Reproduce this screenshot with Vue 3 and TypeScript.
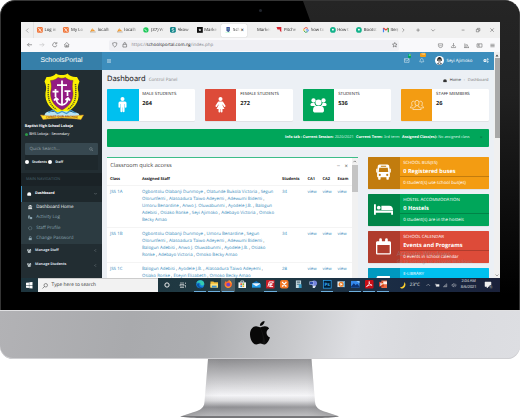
<script setup lang="ts">
interface Tab { label: string; kind: string; color: string; active?: boolean }
interface Stat { label: string; value: number; color: string; icon: string }
interface Panel { title: string; value: string; note: string; color: string; icon: string }
interface ClassRow { name: string; students: number; lines: string[] }
interface TaskIcon { kind: string; open?: boolean; current?: boolean }

const tabs: Tab[] = [
  { label: 'Log in', kind: 'xampp', color: '#f0763a' },
  { label: 'My Lo', kind: 'xampp', color: '#f0763a' },
  { label: 'localh', kind: 'pma', color: '#f29a2e' },
  { label: 'localh', kind: 'pma', color: '#f29a2e' },
  { label: '(37) W', kind: 'dot', color: '#1fc95b' },
  { label: 'Akow', kind: 'teal', color: '#12858a' },
  { label: 'Marke', kind: 'black', color: '#111' },
  { label: 'Sch', kind: 'crest', color: '#3d4f9c', active: true },
  { label: 'Marketi', kind: 'none', color: '' },
  { label: 'Pitche', kind: 'pitch', color: '#d8232f' },
  { label: 'how to', kind: 'google', color: '' },
  { label: 'How t', kind: 'ring', color: '#13b28b' },
  { label: 'Bootst', kind: 'ring', color: '#13b28b' },
  { label: 'Item', kind: 'gmail', color: '' },
]

const stats: Stat[] = [
  { label: 'MALE STUDENTS', value: 264, color: '#00c0ef', icon: 'male' },
  { label: 'FEMALE STUDENTS', value: 272, color: '#dd4b39', icon: 'female' },
  { label: 'STUDENTS', value: 536, color: '#00a65a', icon: 'group' },
  { label: 'STAFF MEMBERS', value: 26, color: '#f39c12', icon: 'people' },
]

const panels: Panel[] = [
  { title: 'SCHOOL BUS(ES)', value: '0 Registered buses', note: '0 student(s) use school bus(es)', color: '#f39c12', icon: 'bus' },
  { title: 'HOSTEL ACCOMMODATION', value: '0 Hostels', note: '0 student(s) are in the hostels', color: '#00a65a', icon: 'bed' },
  { title: 'SCHOOL CALENDAR', value: 'Events and Programs', note: '0 events in school calendar', color: '#dd4b39', icon: 'calendar' },
  { title: 'E-LIBRARY', value: '', note: '', color: '#00c0ef', icon: 'book' },
]

const rows: ClassRow[] = [
  {
    name: 'JSS 1A', students: 34,
    lines: [
      'Ogbontolu Olabanji Dunmoye , Olatunde Bukola Victoria , Segun',
      'Olorunfemi , Alasoadura Taiwo Adeyemi , Adewumi Bidemi ,',
      'Umoru Benardine , Anwo J. Oluwabunmi , Ayodele J.B. , Balogun',
      'Adebisi , Osiako Ronke , Seyi Ajimoko , Adebayo Victoria , Omoko',
      'Becky Amao',
    ],
  },
  {
    name: 'JSS 1B', students: 34,
    lines: [
      'Ogbontolu Olabanji Dunmoye , Umoru Benardine , Segun',
      'Olorunfemi , Alasoadura Taiwo Adeyemi , Adewumi Bidemi ,',
      'Balogun Adebisi , Anwo J. Oluwabunmi , Ayodele J.B. , Osiako',
      'Ronke , Adebayo Victoria , Omoko Becky Amao',
    ],
  },
  {
    name: 'JSS 1C', students: 28,
    lines: [
      'Balogun Adebisi , Ayodele J.B. , Alasoadura Taiwo Adeyemi ,',
      'Osiako Ronke , Eseyin Elizabeth , Omoko Becky Amao',
    ],
  },
]

const submenu = [
  { label: 'Dashboard Home', icon: 'bank', on: true },
  { label: 'Activity Log', icon: 'copy' },
  { label: 'Staff Profile', icon: 'circle' },
  { label: 'Change Password', icon: 'lock' },
]

const taskIcons: TaskIcon[] = [
  { kind: 'edge', open: true }, { kind: 'folder', open: true }, { kind: 'firefox', open: true, current: true },
  { kind: 'store' }, { kind: 'mail' }, { kind: 'filezilla', open: true }, { kind: 'xampp' }, { kind: 'server' },
  { kind: 'globe' }, { kind: 'ps', open: true }, { kind: 'media' }, { kind: 'photos', open: true },
  { kind: 'acrobat', open: true }, { kind: 'ppt', open: true },
]

const split = (line: string): string[] => line.split(/(,)/)
</script>

<template>
  <div class="stage">
    <svg class="sprite" width="0" height="0">
      <symbol id="male" viewBox="0 0 24 32"><circle cx="12" cy="4" r="4" /><path d="M7 9h10a3 3 0 0 1 3 3v8a1.6 1.6 0 0 1-3.2 0v-6h-.7v15a2 2 0 0 1-3.8 0v-8h-.6v8a2 2 0 0 1-3.8 0V14h-.7v6A1.6 1.6 0 0 1 4 20v-8a3 3 0 0 1 3-3z" /></symbol>
      <symbol id="female" viewBox="0 0 24 32"><circle cx="12" cy="4" r="4" /><path d="M9 9h6c1.500 0 2.300 1 3 2l4 6.500a1.700 1.700 0 0 1-2.800 1.800L16 14.500v2l4 7.500h-4v5a1.800 1.800 0 0 1-3.600 0v-5h-.8v5a1.800 1.800 0 0 1-3.600 0v-5H4l4-7.500v-2l-3.200 4.800A1.700 1.700 0 0 1 2 17.500L6 11c.7-1 1.500-2 3-2z" /></symbol>
      <symbol id="group" viewBox="0 0 34 30"><circle cx="7" cy="5" r="4.300" /><circle cx="27" cy="5" r="4.300" /><circle cx="17" cy="9" r="6" /><path d="M3 10h6c1 4 2 5 4 6H3c-3 0-3-5 0-6zM31 10h-6c-1 4-2 5-4 6h10c3 0 3-5 0-6zM12 16h10c4 0 6 3 6 9 0 3-2 4-4 4H10c-2 0-4-1-4-4 0-6 2-9 6-9z" /></symbol>
      <symbol id="people" viewBox="0 0 34 26"><g fill="none" stroke="currentColor" stroke-width="1.700"><ellipse cx="17" cy="8" rx="5" ry="6.500" /><path d="M14 14v3c-3 1-7 2-7 7h20c0-5-4-6-7-7v-3M11 5C7 2 4 5 4 9c0 3 1 4 2 5-3 1-5 3-5 6h6M23 5c4-3 7 0 7 4 0 3-1 4-2 5 3 1 5 3 5 6h-6" /></g></symbol>
      <symbol id="bus" viewBox="0 0 28 32"><path fill-rule="evenodd" d="M7 1h14c3 0 4 2 4 5l1 5v12c0 1-.5 2-2 2v3a2.300 2.300 0 0 1-4.500 0v-3h-11v3A2.300 2.300 0 0 1 4 28v-3c-1.500 0-2-1-2-2V11l1-5c0-3 1-5 4-5zM9 3.500v1.500h10V3.500zM6 7L5 15h18l-1-8zM7 18.500a2 2 0 1 0 0 4 2 2 0 0 0 0-4zM21 18.500a2 2 0 1 0 0 4 2 2 0 0 0 0-4z" /><path d="M0 9h1.500v7H0zM26.500 9H28v7h-1.500z" /></symbol>
      <symbol id="bed" viewBox="0 0 36 24"><path d="M0 2h3.500v12H36v8h-3.500v-4h-29v4H0z" /><circle cx="9" cy="8.500" r="3.500" /><path d="M14 5h15c4 0 7 3 7 8H14z" /></symbol>
      <symbol id="calendar" viewBox="0 0 28 30"><path fill-rule="evenodd" d="M3 5h3V2a2 2 0 0 1 5 0v3h6V2a2 2 0 0 1 5 0v3h3c2 0 3 1 3 3v19c0 2-1 3-3 3H3c-2 0-3-1-3-3V8c0-2 1-3 3-3zM2.500 12v15.500h23V12z" /></symbol>
      <symbol id="book" viewBox="0 0 28 30"><path d="M5 1h21v22H6v3h20v3H5c-3 0-4-2-4-5V5c0-3 1-4 4-4z" /></symbol>
      <symbol id="dash" viewBox="0 0 24 20"><path d="M12 1a11 11 0 0 1 11 11c0 3-1 5-2 7H3c-1-2-2-4-2-7A11 11 0 0 1 12 1z" /></symbol>
      <symbol id="bank" viewBox="0 0 24 24"><path d="M12 0l12 6v2H0V6zM3 10h3v8H3zM8 10h3v8H8zM13 10h3v8h-3zM18 10h3v8h-3zM1 19h22v2H1zM0 22h24v2H0z" /></symbol>
      <symbol id="copy" viewBox="0 0 24 24"><path d="M1 2h8l3 3v3H8v10H1zM10 10h13v12H10z" /></symbol>
      <symbol id="circle" viewBox="0 0 24 24"><circle cx="12" cy="12" r="9" fill="none" stroke="currentColor" stroke-width="3" stroke-dasharray="5 2" /></symbol>
      <symbol id="lock" viewBox="0 0 24 24"><path fill-rule="evenodd" d="M4 11h2V7a6 6 0 0 1 12 0v4h2v12H4zm5 0h6V7a3 3 0 0 0-6 0z" /></symbol>
      <symbol id="search" viewBox="0 0 24 24"><g fill="none" stroke="currentColor" stroke-width="2.500"><circle cx="10" cy="10" r="7" /><path d="M15 15l7 7" /></g></symbol>
      <symbol id="cogs" viewBox="0 0 28 24"><g fill="none" stroke="currentColor"><circle cx="9" cy="12" r="5" stroke-width="5" /><circle cx="22" cy="6" r="3" stroke-width="3.500" /><circle cx="22" cy="18" r="3" stroke-width="3.500" /></g></symbol>
    </svg>

    <div class="monitor">
      <div class="gloss"></div>
      <i class="camera"></i>
      <div class="screen">
        <!-- browser tab strip -->
        <div class="tabs">
          <svg class="chev" viewBox="0 0 12 12"><path d="M8 1L3 6l5 5" /></svg>
          <div class="tablist">
            <div v-for="(t, i) in tabs" :key="i" class="tab" :class="{ active: t.active, bare: t.kind === 'none' }">
              <svg v-if="t.kind !== 'none'" class="fav" viewBox="0 0 12 12">
                <g v-if="t.kind === 'xampp'"><rect width="12" height="12" rx="2.500" :fill="t.color" /><path d="M3 3l6 6M9 3L3 9M3 3h2M9 9H7" stroke="#fff" stroke-width="1.500" fill="none" /></g>
                <g v-else-if="t.kind === 'pma'"><path d="M0 10L5 2l1 7zM6 4l5 5H6z" :fill="t.color" /><path d="M0 10.500h12" stroke="#8b8b8b" /></g>
                <g v-else-if="t.kind === 'dot'"><circle cx="6" cy="6" r="5.500" :fill="t.color" /><path d="M4 4c0 3 2 4 4 4" stroke="#fff" stroke-width="1.500" fill="none" /></g>
                <g v-else-if="t.kind === 'teal'"><rect width="12" height="12" rx="3" :fill="t.color" /><path d="M8 3C3 2 3 6 6 6s3 4-2 3" stroke="#fff" stroke-width="1.500" fill="none" /></g>
                <g v-else-if="t.kind === 'black'"><rect width="12" height="12" :fill="t.color" /><path d="M6 3l1 2h2L7.500 6.500 8 9 6 7.500 4 9l.5-2.500L3 5h2z" fill="#fff" /></g>
                <g v-else-if="t.kind === 'crest'"><path d="M3 0h7v8l-3 3-4-3z" :fill="t.color" /><path d="M1 11h10M5 3h3M5 6h3" stroke="#8fa" /></g>
                <g v-else-if="t.kind === 'pitch'"><path d="M1 0h10v11L8 8V5H3z" :fill="t.color" /></g>
                <g v-else-if="t.kind === 'google'" fill="none" stroke-width="2"><path d="M10 3A5 5 0 0 0 2 4" stroke="#ea4335" /><path d="M2 4a5 5 0 0 0 0 4" stroke="#fbbc05" /><path d="M2 8a5 5 0 0 0 7 2" stroke="#34a853" /><path d="M9 10c2-1 2-3 2-4H6" stroke="#4285f4" /></g>
                <g v-else-if="t.kind === 'ring'"><circle cx="6" cy="6" r="6" :fill="t.color" /><circle cx="6" cy="5.500" r="2" fill="#fff" /></g>
                <g v-else fill="none" stroke-width="2.500"><path d="M1 11V2" stroke="#4285f4" /><path d="M1 2l5 4 5-4" stroke="#ea4335" /><path d="M11 2v9" stroke="#34a853" /></g>
              </svg>
              <span class="tlabel">{{ t.label }}</span>
              <b v-if="t.active" class="tx">×</b>
            </div>
          </div>
          <div class="winctl">
            <svg viewBox="0 0 12 12"><path d="M4 1l5 5-5 5" /></svg>
            <svg viewBox="0 0 12 12"><path d="M6 1v10M1 6h10" /></svg>
            <svg viewBox="0 0 12 12"><path d="M1 4l5 5 5-5" /></svg>
            <i></i>
            <svg viewBox="0 0 12 12"><path d="M2 6h8" /></svg>
            <svg viewBox="0 0 12 12"><path d="M1 4h7v7H1zM4 4V1h7v7H8" /></svg>
            <svg viewBox="0 0 12 12"><path d="M1 1l10 10M11 1L1 11" /></svg>
          </div>
        </div>

        <!-- address bar -->
        <div class="toolbar">
          <div class="nav">
            <svg viewBox="0 0 12 12"><path d="M11 6H1M5 2L1 6l4 4" /></svg>
            <svg class="dim" viewBox="0 0 12 12"><path d="M1 6h10M7 2l4 4-4 4" /></svg>
            <svg viewBox="0 0 12 12"><path d="M10.500 7A4.600 4.600 0 1 1 9 2.500M10.500 0v4h-4" /></svg>
            <svg viewBox="0 0 12 12"><path d="M1 6l5-5 5 5M2 5v6h8V5M5 11V7h2v4" /></svg>
          </div>
          <div class="url">
            <svg viewBox="0 0 12 12"><path d="M6 1c2 1 3 1 4.500 1 0 4-1 7-4.500 9C2.500 9 1.500 6 1.500 2 3 2 4 2 6 1z" /></svg>
            <svg viewBox="0 0 12 12"><path d="M2 5h8v6H2zM4 5V3a2 2 0 0 1 4 0v2" /></svg>
            <span>https://<em>schoolsportal.com.ng</em>/index.php</span>
            <svg class="star" viewBox="0 0 12 12"><path d="M6 1l1.500 3.500 3.500.3L8.300 7l1 4L6 9l-3.300 2 1-4L1 4.800l3.500-.3z" /></svg>
          </div>
          <div class="tools">
            <svg viewBox="0 0 12 12"><path d="M1 2h10v4a5 5 0 0 1-10 0zM3.500 5L6 7.500 8.500 5" /></svg>
            <svg viewBox="0 0 12 12"><path d="M6 0v8M3 5l3 3 3-3M1 8v3h10V8" /></svg>
            <svg viewBox="0 0 12 12"><path d="M2 1v10M5 3v8M7 3l4 8M0 11h12" /></svg>
            <svg viewBox="0 0 12 12"><path d="M0 2h12v8H0zM5 2v8M2 4h2M2 6h2" /></svg>
            <svg viewBox="0 0 12 12"><path d="M1 3h10M1 6h10M1 9h10" /></svg>
          </div>
        </div>

        <!-- web page -->
        <div class="page">
          <aside class="side">
            <div class="brand">SchoolsPortal</div>
            <svg class="crest" viewBox="0 0 82 94">
              <path d="M10 8C18 9 25 6 29 1c5 4 18 4 23 0 4 5 11 8 19 7l5 9c-4 9-4 14-2 22 2 20-9 34-33 45C17 73 6 59 8 39c2-8 2-13-2-22z" fill="#fdf100" />
              <path d="M18 15c7 0 12-3 15-6 5 2 10 2 15 0 3 3 8 6 15 6-2 8-2 15 0 25 0 16-7 26-22 34C26 66 18 56 18 40c2-10 2-17 0-25z" fill="#931b83" stroke="#6d4c20" stroke-width="1" />
              <path d="M14 22c-1 22-3 38 16 51M68 22c1 22 3 38-16 51" fill="none" stroke="#56562a" stroke-width="3" stroke-dasharray="2.500 1.500" />
              <g fill="none" stroke="#fff" stroke-width="3.500"><path d="M41 15v49M31 24h20M28 32v16M22 37h12M46 36h12M52 36v10M29 51c1 9 6 12 12 13 6-1 11-4 12-13M25 55l4-5 5 4M48 54l5-4 4 5" /></g>
              <path d="M8 80c8-6 15-1 24-2 9-1 20-3 28 0 5 2 9 0 14 3l4 7H4z" fill="#b8e4f4" /><path d="M14 79l9-5 9 7 9-4 9 4 9-6 9 5" fill="none" stroke="#4298cc" stroke-width="2.500" />
              <path d="M-2 84c27 4 57 4 86 0l-5 9c-25-4-51-4-76 0z" fill="#ffe52a" stroke="#e58a2d" stroke-width="1" />
              <path id="motto" d="M9 91q32-4 66 0" fill="none" /><text fill="#a24b13" font-size="6" font-weight="700"><textPath href="#motto">CHRIST OUR ANCHOR</textPath></text>
            </svg>
            <div class="school"><b>Baptist High School Lokoja</b></div>
            <div class="school status"><i></i>BHS Lokoja - Secondary</div>
            <div class="search"><span>Quick Search...</span><svg><use href="#search" /></svg></div>
            <div class="radios"><i></i><b>Students</b><i></i><b>Staff</b></div>
            <div class="mainnav">MAIN NAVIGATION</div>
            <div class="item on"><svg><use href="#dash" /></svg><b>Dashboard</b><svg class="arr" viewBox="0 0 8 8"><path d="M1 3l3 3 3-3" /></svg></div>
            <div class="sub">
              <div v-for="s in submenu" :key="s.label" :class="{ hot: s.on }"><svg><use :href="'#' + s.icon" /></svg>{{ s.label }}</div>
            </div>
            <div v-for="m in ['Manage Staff', 'Manage Students']" :key="m" class="item">
              <svg><use href="#group" /></svg><b>{{ m }}</b><svg class="arr" viewBox="0 0 8 8"><path d="M5 1L2 4l3 3" /></svg>
            </div>
            <div class="item"><svg><use href="#group" /></svg></div>
          </aside>

          <main class="main">
            <header class="top">
              <svg class="burger" viewBox="0 0 8 8"><path d="M0 1.500h8M0 4h8M0 6.500h8" /></svg>
              <div class="right">
                <span class="ico"><svg viewBox="0 0 12 10"><path d="M1 1h10v8H1zM1 2l5 4 5-4" /></svg><i class="bdg g">4</i></span>
                <span class="ico"><svg viewBox="0 0 12 12"><path d="M1 9c2-2 1-8 5-8s3 6 5 8zM5 11h2" /></svg><i class="bdg o">10</i></span>
                <svg class="avatar" viewBox="0 0 20 20"><circle cx="10" cy="10" r="10" fill="#fff" /><path d="M5 8c0-8 10-8 10 0v3H5z" fill="#252525" /><path d="M7 8h6v4c0 4-6 4-6 0z" fill="#c6c0bc" /><path d="M7 9h6M7.500 11h5" stroke="#333" /><path d="M4 18c0-5 12-5 12 0l-6 2z" fill="#6f747a" /><path d="M8 15h4l-2 4z" fill="#fff" /></svg>
                <span class="user">Seyi Ajimoko</span>
                <svg class="cogs"><use href="#cogs" /></svg>
              </div>
            </header>
            <div class="content">
              <div class="heading">
                <h1>Dashboard</h1><small>Control Panel</small>
                <div class="crumb"><svg><use href="#dash" /></svg><span>Home</span><em>›</em><u>Dashboard</u></div>
              </div>
              <div class="stats">
                <div v-for="s in stats" :key="s.label" class="stat">
                  <div class="sq" :style="{ background: s.color }"><svg :class="s.icon"><use :href="'#' + s.icon" /></svg></div>
                  <div class="st"><span>{{ s.label }}</span><b>{{ s.value }}</b></div>
                </div>
              </div>
              <div class="alert">
                <b>Info tab : Current Session:</b><span>2020/2021</span><b>Current Term:</b><span>3rd term</span><b>Assigned Class(es):</b><span>No assigned class</span><i>×</i>
              </div>
              <div class="cols">
                <section class="box">
                  <div class="bh"><span>Classroom quick access</span><i>−</i><i>×</i></div>
                  <div class="tr th"><b>Class</b><b>Assigned Staff</b><b>Students</b><b>CA1</b><b>CA2</b><b>Exam</b></div>
                  <div v-for="r in rows" :key="r.name" class="tr">
                    <a>{{ r.name }}</a>
                    <div class="staff">
                      <p v-for="(l, i) in r.lines" :key="i"><template v-for="(p, j) in split(l)" :key="j"><em v-if="p === ','">,</em><template v-else>{{ p }}</template></template></p>
                    </div>
                    <a>{{ r.students }}</a><a>view</a><a>view</a><a>view</a>
                  </div>
                  <div class="inbar"><svg viewBox="0 0 8 8"><path d="M1 5l3-3 3 3" /></svg><i></i></div>
                </section>
                <section class="panels">
                  <div v-for="p in panels" :key="p.title" class="panel" :style="{ background: p.color }">
                    <div class="pi"><svg :class="p.icon"><use :href="'#' + p.icon" /></svg></div>
                    <div class="pt"><span>{{ p.title }}</span><b>{{ p.value }}</b><hr><small>{{ p.note }}</small></div>
                  </div>
                  <div class="mark"><span>Activate Windows</span><small>Go to Settings to activate Windows.</small></div>
                </section>
              </div>
            </div>
          </main>
          <div class="scroll"><svg viewBox="0 0 8 8"><path d="M1 6l3-4 3 4z" /></svg><i></i><svg class="dn" viewBox="0 0 8 8"><path d="M1 2l3 3 3-3" /></svg></div>
        </div>

        <!-- desktop taskbar -->
        <div class="task">
          <div class="start"><svg viewBox="0 0 12 12"><path d="M0 1.500l5.400-.8v5H0zM6 .6l6-.6v5.700H6zM0 6.300h5.400v5L0 10.500zM6 6.300h6V12l-6-.6z" /></svg></div>
          <div class="tsearch"><svg viewBox="0 0 12 12"><circle cx="7.500" cy="4.500" r="3.500" /><path d="M5 7l-4 4" /></svg>Type here to search</div>
          <div class="sys"><svg viewBox="0 0 12 12"><circle cx="6" cy="6" r="4.300" stroke-width="2" /></svg></div>
          <div class="sys two"><svg viewBox="0 0 12 12"><path d="M0 2h8M0 5h8v3H0zM0 11h8M11 1v3M11 6v5" stroke-width="1.200" /></svg></div>
          <div v-for="t in taskIcons" :key="t.kind" class="ti" :class="{ open: t.open, current: t.current }">
            <svg viewBox="0 0 18 18">
              <g v-if="t.kind === 'edge'"><circle cx="9" cy="9" r="8.500" fill="#1683d8" /><path d="M1 7C3-2 17-1 17.500 8c0 4-6 5-8 2 1-4-5-6-8.500-3z" fill="#35cbb0" /><path d="M7 8c-2 5 3 9 8 7-5 5-13 1-13-5 1-2 3-3 5-2z" fill="#0b54a4" /></g>
              <g v-else-if="t.kind === 'folder'"><path d="M1 3h6l2 2h8v11H1z" fill="#f4bd38" /><path d="M1 8h16v8H1z" fill="#ffdf77" /><path d="M4 12h10v4H4z" fill="#3b93d4" /></g>
              <g v-else-if="t.kind === 'firefox'"><path d="M9 1c6 0 8 5 8 8 0 5-4 8-8 8s-8-3-8-8c0-2 1-5 3-7l2 3z" fill="#ff6b2b" /><path d="M11 0c3 3 5 5 5 9-2-4-5-5-5-9z" fill="#ffc83a" /><circle cx="9" cy="10" r="4" fill="#7a3fc8" /><path d="M2 9c2 6 9 7 13 3-3 6-12 6-13-3z" fill="#ffad2a" /></g>
              <g v-else-if="t.kind === 'store'"><path d="M6 5V2h6v3" fill="none" stroke="#fff" stroke-width="1.500" /><path d="M1 5h16v12H1z" fill="#f4f4f4" /><path d="M5 7h3.500v3.500H5z" fill="#e94f2b" /><path d="M9.500 7H13v3.500H9.500z" fill="#77b52b" /><path d="M5 11.500h3.500V15H5z" fill="#2897d8" /><path d="M9.500 11.500H13V15H9.500z" fill="#f0b51e" /></g>
              <g v-else-if="t.kind === 'mail'"><path d="M0 8l9-6 9 6v8H0z" fill="#0d72bd" /><path d="M1 7h16v4l-8 4-8-4z" fill="#e8f4ff" /><path d="M0 8l9 5 9-5v8H0z" fill="#26a0ec" /></g>
              <g v-else-if="t.kind === 'filezilla'"><rect width="18" height="18" rx="1" fill="#c91e27" /><path d="M4 14L7 4h9l-4 4H9l-1 6M7 9h6l-5 5h7" stroke="#fff" stroke-width="2" fill="none" /></g>
              <g v-else-if="t.kind === 'xampp'"><rect width="18" height="18" rx="4" fill="#f37623" /><path d="M5 5l8 8M13 5l-8 8M4 5h3M11 5h3M4 13h3M11 13h3" stroke="#fff" stroke-width="2.500" /></g>
              <g v-else-if="t.kind === 'server'"><path d="M4 1h11v16H4z" fill="#c5d8df" /><path d="M6 3h7v3H6zM6 8h7v2H6z" fill="#58717f" /><path d="M10 9h6v8h-6z" fill="#3698c3" /></g>
              <g v-else-if="t.kind === 'globe'"><circle cx="11" cy="7" r="6" fill="#7685dd" /><path d="M1 3h9v7H1z" fill="#c8d8f5" /><path d="M2 4h7v5H2z" fill="#2f4cb0" /><path d="M8 12h7l-3 5H8z" fill="#dce2ed" /></g>
              <g v-else-if="t.kind === 'ps'"><rect x=".7" y=".7" width="16.600" height="16.600" fill="#001d33" stroke="#30a8f5" stroke-width="1.500" /><text x="3" y="13" font-size="10" font-weight="700" fill="#37aef9">Ps</text></g>
              <g v-else-if="t.kind === 'media'"><path d="M1 3h16v12H1z" fill="#e4eef3" /><circle cx="9" cy="9" r="5.500" fill="#ef8027" /><path d="M7 6l5 3-5 3z" fill="#fff" /><path d="M14 3h3v12h-3z" fill="#4da2d5" /></g>
              <g v-else-if="t.kind === 'photos'"><path d="M0 2h18v14H0z" fill="#3489ed" /><path d="M0 14l6-7 4 4 3-3 5 6v2H0z" fill="#0c3477" /><path d="M11 2h7v5z" fill="#8bc9ff" /></g>
              <g v-else-if="t.kind === 'acrobat'"><rect width="18" height="18" rx="2" fill="#c90d16" /><path d="M3 14c5-2 7-8 6-11-2 4 3 8 6 8-4-1-8 0-12 3z" fill="none" stroke="#fff" stroke-width="1.500" /></g>
              <g v-else><path d="M5 1h12v16H5z" fill="#ec6a43" /><path d="M0 4h10v10H0z" fill="#c8371c" /><path d="M9 3h8v6H9z" fill="#fff2eb" /><text x="2" y="13" font-size="10" font-weight="700" fill="#fff">P</text></g>
            </svg>
          </div>
          <div class="tray">
            <svg class="moon" viewBox="0 0 12 12"><path d="M8 0c4 4 2 11-4 12-2 0-3-1-4-2 5 0 8-4 8-10z" fill="#ffd22e" /></svg>
            <span class="deg">23°C</span>
            <svg viewBox="0 0 12 12"><path d="M1 8l5-5 5 5" /></svg>
            <svg viewBox="0 0 12 12"><path d="M3 4h8v5H3z" fill="#eee" /><path d="M0 3h4M1 3v3" /></svg>
            <svg viewBox="0 0 12 12"><path d="M1 10L10 2v8zM5 10V7M8 10V5" /></svg>
            <svg viewBox="0 0 12 12"><path d="M0 4h2l3-3v10L2 8H0zM7 4c1 1 1 3 0 4M9 2c2 2 2 6 0 8" /></svg>
            <div class="clock"><span>2:04 AM</span><span>8/6/2021</span></div>
            <div class="note"><svg viewBox="0 0 12 12"><path d="M0 0h12v9H7l-3 3V9H0z" /></svg><i>1</i></div>
          </div>
        </div>
      </div>
    </div>

    <div class="chin">
      <svg viewBox="0 0 20 24"><path d="M14.500 0c.3 2.500-2.200 5-4.600 4.800C9.700 2.500 12 .4 14.500 0z" /><path d="M10 6.300c1.200 0 2.700-1.200 5-1.100 1.800.1 3.200.8 4.100 2.200-3.900 2.400-3.100 7.400.9 9.100-1 2.900-3.200 6.800-5.600 6.900-1.600 0-2.200-.9-4.100-.9s-2.500.9-4.100.9C2.900 23.400 0 18.300 0 13.400c0-5 3-8 6-8.100 1.700 0 3 1 4 1z" /><path d="M9 5.800c3 1 5 10 7 17-1 .8-3 .5-4 .1C14 17 12 10 9 5.800z" fill="#292929" opacity=".35" /></svg>
    </div>
    <svg class="stand" viewBox="0 0 160 60">
      <defs>
        <linearGradient id="neck" x1="0" y1="0" x2="0" y2="1"><stop offset="0" stop-color="#858588" /><stop offset=".18" stop-color="#a5a5a8" /><stop offset=".43" stop-color="#d0d0d3" /><stop offset=".63" stop-color="#f3f3f6" /><stop offset=".72" stop-color="#d6d6d9" /><stop offset=".83" stop-color="#88888c" /><stop offset="1" stop-color="#b8b8bb" /></linearGradient>
        <linearGradient id="edge" x1="0" y1="0" x2="1" y2="0"><stop offset="0" stop-color="#555" stop-opacity=".3" /><stop offset=".25" stop-color="#fff" stop-opacity=".05" /><stop offset=".8" stop-color="#fff" stop-opacity=".15" /><stop offset="1" stop-color="#555" stop-opacity=".22" /></linearGradient>
      </defs>
      <path d="M28 0h103.500l3.500 43c.5 7 6 8.500 11 10l12 4q1 1 0 1H2q-2 0 0-1l12-4c5-1.500 10-3 10.500-10z" fill="url(#neck)" />
      <path d="M28 0h103.500l3.500 43c.5 7 6 8.500 11 10l12 4H2l12-4c5-1.500 10-3 10.500-10z" fill="url(#edge)" />
      <path d="M0 57h159c-3 1.500-12 1.900-20 1.900H20c-8 0-17-.4-20-1.900z" fill="#77777a" />
    </svg>
  </div>
</template>

<style>
body { background: #fff; overflow: hidden; }
</style>

<style scoped>
* { box-sizing: border-box; }
.stage { position: relative; width: 520px; height: 418px; overflow: hidden; background: #fff; font-family: "Open Sans", "Noto Sans", sans-serif; font-size: 4.300px; line-height: 1; color: #333; white-space: nowrap; display: flex; flex-direction: column; align-items: center; text-rendering: geometricPrecision; }
.sprite { position: absolute; }
svg { display: block; flex: none; fill: currentColor; overflow: visible; }
i, em { font-style: normal; }
p, h1 { margin: 0; }
.monitor { position: relative; width: 520px; height: 310px; flex: none; background: #000; border-radius: 15px 15px 0 0; border: 1px solid #353535; border-bottom: 0; padding: 21px 19px 18px 20px; overflow: hidden; }
.gloss { position: absolute; inset: 0; background: linear-gradient(180deg, #252525, #202020 30%, #000 95%); clip-path: polygon(302px 0, 520px 0, 520px 310px, 490px 310px, 490px 22px, 310px 22px); }
.camera { position: absolute; left: 258px; top: 8px; width: 3px; height: 3px; border-radius: 50%; background: #20242c; }
.screen { position: relative; width: 479px; height: 270px; overflow: hidden; display: flex; flex-direction: column; background: #ecf0f5; }

.tabs { height: 16px; flex: none; display: flex; align-items: center; background: #f0f0f0; font-size: 4.300px; color: #222; }
.chev { width: 5px; height: 5px; margin-left: 4px; fill: none; stroke: #555; }
.tablist { display: flex; width: 371px; margin-left: 3px; height: 16px; align-items: center; padding-left: 1px; border-left: 1px solid #e2e2e2; }
.tab { width: 26.650px; height: 13px; display: flex; align-items: center; padding-left: 1.800px; flex: none; overflow: hidden; }
.tab.active { background: #fff; box-shadow: 0 0 1px #aaa; border-radius: 1.500px; padding-left: 4px; width: 26px; }
.tab.bare { padding-left: 9.500px; width: 27px; }
.fav { width: 5.800px; height: 5.800px; }
.tlabel { margin-left: 1.800px; width: 14px; overflow: hidden; line-height: 7px; -webkit-mask-image: linear-gradient(90deg, #000 55%, transparent 98%); }
.bare .tlabel { margin: 0; }
.tab.active .tlabel { width: 7px; }
.tx { font-size: 6px; font-weight: 400; margin-left: .5px; }
.tab:last-child .tlabel { width: 9px; }
.winctl { display: flex; flex: 1; align-items: center; justify-content: space-between; padding: 0 5.500px 0 3px; border-left: 1px solid #ddd; margin-left: -7px; }
.winctl svg { width: 4.200px; height: 4.200px; fill: none; stroke: #444; stroke-width: 1.300; }
.winctl i { width: 5px; }

.toolbar { height: 14px; flex: none; display: flex; align-items: center; background: #f9f9fb; }
.nav { width: 88px; display: flex; gap: 7px; padding-left: 5.500px; }
.nav svg, .tools svg, .url svg { width: 5.500px; height: 5.500px; fill: none; stroke: #555; stroke-width: 1.200; }
.nav svg.dim { stroke: #bbb; }
.url { width: 290px; height: 11px; background: #f0f0f4; border-radius: 2px; display: flex; align-items: center; padding: 0 2px; gap: 4.200px; font-size: 4.450px; color: #85858a; }
.url em { color: #222; }
.url .star { margin-left: auto; }
.url svg:first-child { margin-left: 1px; }
.tools { display: flex; flex: 1; justify-content: space-between; padding: 0 5.500px 0 39px; }
.tools svg { width: 5px; height: 5px; }

.page { height: 226px; flex: none; display: flex; overflow: hidden; }
.side { width: 81px; height: 226px; overflow: hidden; flex: none; background: #222d32; color: #fff; display: flex; flex-direction: column; align-items: stretch; }
.brand { height: 17.500px; flex: none; background: #367fa9; text-align: center; font: 6.850px/17.500px "Liberation Sans", sans-serif; }
.crest { width: 42px; height: 47px; margin: 3.500px 0 0 19.500px; }
.school { font-size: 3.750px; height: 7px; line-height: 7px; margin-top: 3px; padding-left: 3.700px; letter-spacing: -.05px; }
.school.status { margin-top: .5px; display: flex; align-items: center; }
.status i { width: 3px; height: 3px; border-radius: 50%; background: #2c9947; margin-right: 1.500px; }
.search { margin: 5px 4px 0; height: 12.500px; flex: none; display: flex; align-items: center; justify-content: space-between; background: #374850; border-radius: 1px; color: #96a1a6; padding: 0 4.500px; font-size: 4.400px; }
.search svg { width: 4.500px; height: 4.500px; }
.radios { height: 14.500px; margin: 0 4px; flex: none; background: #1e282c; display: flex; align-items: center; font-size: 3.500px; gap: 3px; color: #dde2e4; letter-spacing: -.1px; }
.radios i { width: 4px; height: 4px; border-radius: 50%; background: #fff; }
.radios b + i { margin-left: -1.500px; }
.mainnav { margin-top: 3.500px; height: 13px; flex: none; line-height: 13px; background: #1a2226; color: #4b646f; font-size: 3.900px; padding-left: 5px; }
.item { height: 14.500px; flex: none; display: flex; align-items: center; padding-left: 6px; font-size: 3.700px; color: #d3dde1; letter-spacing: -.05px; }
.item svg { width: 4.500px; height: 4px; margin-right: 3.500px; }
.item .arr { width: 3px; height: 3px; margin: 0 5px 0 auto; fill: none; stroke: #aab5ba; }
.item.on { height: 15.500px; background: #1e282c; color: #fff; border-left: 1px solid #3c8dbc; padding-left: 5px; }
.sub { height: 42px; flex: none; background: #2c3b41; color: #8aa4af; font-size: 4.500px; }
.sub div { height: 10.500px; display: flex; align-items: center; padding-left: 7px; }
.sub svg { width: 4.500px; height: 4.500px; margin-right: 3.800px; }
.sub .hot { color: #fff; }

.main { width: 392px; flex: none; overflow: hidden; }
.top { height: 17.500px; background: #3c8dbc; display: flex; align-items: center; color: #fff; }
.burger { width: 4px; height: 4px; margin-left: 5px; stroke: #fff; }
.right { display: flex; align-items: center; margin-left: auto; padding-right: 5.500px; }
.ico { position: relative; margin-right: 9px; }
.ico svg { width: 5.500px; height: 5px; fill: none; stroke: #fff; }
.bdg { position: absolute; left: 4px; top: -4px; font-size: 3px; line-height: 3.500px; padding: 0 .8px; border-radius: 1px; }
.g { background: #00a65a; } .o { background: #f39c12; left: 1.500px; top: -5px; padding: 0 1.500px; }
.avatar { width: 9px; height: 9px; margin-right: 3px; margin-left: 1.500px; }
.user { font-size: 4.400px; width: 27px; margin-right: 9px; }
.cogs { width: 6px; height: 5px; }
.content { padding: 0 5.500px 0 5px; }
.heading { height: 19.500px; display: flex; align-items: center; padding-top: 1px; }
h1 { font-size: 7.500px; font-weight: 400; color: #222; -webkit-text-stroke: .1px #222; }
.heading small { font-size: 4.550px; color: #888; margin: 2px 0 0 3px; }
.crumb { margin-left: auto; display: flex; align-items: center; font-size: 4px; gap: 2.800px; color: #333; padding-top: 2px; }
.crumb svg { width: 4px; height: 3.500px; } .crumb em { color: #aaa; } .crumb u { text-decoration: none; color: #777; }
.stats { display: grid; grid-template-columns: repeat(4, 87.700px); justify-content: space-between; }
.stat { height: 32px; background: #fff; display: flex; box-shadow: 0 .3px .5px #bbb; border-radius: .7px; overflow: hidden; }
.sq { width: 31.500px; display: grid; place-items: center; color: #fff; }
.sq svg { width: 13px; height: 16px; } .sq svg.group { width: 17px; height: 17px; } .sq svg.people { width: 14px; height: 12px; opacity: .85; }
.st { padding: 3.300px 0 0 3.800px; display: flex; flex-direction: column; }
.st span { font-size: 4.350px; line-height: 5px; color: #222; } .st b { font-size: 5.600px; line-height: 6px; margin-top: 2.700px; color: #222; }
.alert { height: 18px; margin-top: 8px; background: #00a65a; border-radius: 1px; color: #fff; display: flex; align-items: center; justify-content: flex-end; font-size: 3.840px; padding-right: 6px; }
.alert b { margin-left: 2.500px; letter-spacing: -.03px; } .alert span { margin-left: 1.200px; color: #dff5e9; } .alert i { color: #086b40; font-size: 5px; margin-left: 10px; }
.cols { margin-top: 10px; display: flex; justify-content: space-between; align-items: flex-start; }
.box { position: relative; width: 251px; height: 125px; border-top: 1.500px solid #3dbd89; background: #fff; color: #222; font-size: 4.400px; overflow: hidden; }
.bh { height: 14.500px; display: flex; align-items: center; padding: 1px 10px 0 3.300px; font-size: 5.600px; color: #444; }
.bh span { margin-right: auto; } .bh i { color: #666; margin-left: 4.500px; font-size: 6px; }
.tr { display: grid; grid-template-columns: 32px 140px 25.500px 15px 15px 14px; padding: 3.200px 0 3px 3px; line-height: 7px; border-bottom: 1px solid #f4f4f4; }
.tr.th { font-size: 4px; padding: 3px 0 2.500px 3px; height: 13px; letter-spacing: -.03px; }
.tr a, .staff { color: #3c8dbc; } .staff em { color: #222; }
.staff p { height: 7px; }
.inbar { position: absolute; right: 0; top: 0; width: 6px; height: 125px; background: #f1f1f1; padding: 1.500px 0 0; }
.inbar svg { width: 3.500px; height: 3.500px; margin: 0 auto 1.500px; fill: none; stroke: #555; stroke-width: 1.500; }
.inbar i { display: block; height: 27.500px; background: #c4c4c4; }
.panels { position: relative; width: 120.800px; display: flex; flex-direction: column; gap: 5.300px; }
.panel { height: 31.700px; flex: none; display: flex; color: #fff; border-radius: .7px; overflow: hidden; box-shadow: 0 .3px .5px #bbb; }
.pi { width: 32px; background: rgba(0, 0, 0, .2); display: grid; place-items: center; }
.pi svg { width: 15px; height: 17px; } .pi svg.bed { width: 19px; height: 13px; }
.pt { flex: 1; display: flex; flex-direction: column; }
.pt span, .pt b, .pt small { margin-left: 3.500px; }
.pt span { font-size: 4.380px; line-height: 6px; margin-top: 2.800px; } .pt b { font-size: 5.650px; line-height: 8px; margin-top: 1.200px; min-height: 8px; }
.pt small { font-size: 4.400px; line-height: 6px; margin-top: 2.500px; }
hr { width: 100%; height: .7px; border: 0; margin: 1.500px 0 0; background: rgba(0, 0, 0, .2); }
.mark { position: absolute; left: 29px; top: 93px; color: rgba(140, 140, 140, .6); display: flex; flex-direction: column; }
.mark span { font-size: 6.600px; line-height: 8px; } .mark small { font-size: 4.700px; line-height: 8px; }
.scroll { width: 6px; height: 226px; background: #f0f0f0; display: flex; flex-direction: column; align-items: center; }
.scroll svg { width: 4px; height: 5px; fill: #444; margin-top: 1px; } .scroll i { width: 5px; height: 80px; background: #a8a8a8; }
.scroll svg.dn { fill: none; stroke: #555; margin-top: auto; }

.task { height: 14px; flex: none; display: flex; align-items: center; background: linear-gradient(90deg, #1d343d, #203a44 50%, #1a2b44 80%, #1a213a); color: #e8eaec; }
.start { width: 17px; display: grid; place-items: center; } .start svg { width: 6.500px; height: 6.500px; fill: #fff; }
.tsearch { width: 120px; height: 14px; background: #f2f2f2; border-top: .5px solid #ccc; color: #333; display: flex; align-items: center; gap: 3.500px; padding-left: 4px; font-size: 4.850px; }
.tsearch svg { width: 6px; height: 6px; fill: none; stroke: #333; }
.sys { width: 17px; display: grid; place-items: center; } .sys svg { width: 6px; height: 6px; fill: none; stroke: #eee; } .sys.two { padding-right: 1px; }
.ti { width: 14.100px; height: 14px; display: grid; place-items: center; border-bottom: 1px solid transparent; }
.ti:nth-child(5) { margin-left: 1px; }
.ti svg { width: 8.500px; height: 8.500px; } .ti.open { border-image: linear-gradient(90deg, transparent 14%, #6eafdd 14%, #6eafdd 86%, transparent 86%) 1; border-width: 0 0 1px; border-style: solid; } .ti.current { background: #4c5e66; }
.tray { flex: 1; display: flex; align-items: center; padding-left: 10px; }
.tray svg { width: 4.500px; height: 4.500px; fill: none; stroke: #eee; margin-right: 4.200px; }
.tray svg.moon { width: 6.500px; height: 6.500px; stroke: none; margin-right: 3px; }
.deg { font-size: 4.500px; width: 11px; margin-right: 5px; }
.clock { display: flex; flex-direction: column; align-items: center; font-size: 3.950px; line-height: 6px; width: 16px; letter-spacing: -.1px; }
.note { position: relative; margin-left: 8.500px; } .tray .note svg { width: 6px; height: 6px; fill: #eee; margin: 0; }
.note i { position: absolute; left: 3.500px; top: 2.500px; width: 4.500px; height: 4.500px; border-radius: 50%; background: #333a48; font-size: 3px; line-height: 4.500px; text-align: center; }

.chin { width: 520px; height: 48.500px; flex: none; border-radius: 0 0 13px 13px; border-top: 1px solid #e0e0e2; background: linear-gradient(100deg, #b2b2b5 0, #a9aaad 25%, #adaeb1 40%, #c9cacd 57%, #dedfe3 68%, #d9dade 80%, #dddee2 100%); display: flex; justify-content: center; padding-top: 9.500px; box-shadow: inset 0 -1px 0 #cfcfd2; }
.chin svg { width: 20px; height: 24px; fill: #080808; }
.stand { width: 160px; height: 60px; }
</style>
